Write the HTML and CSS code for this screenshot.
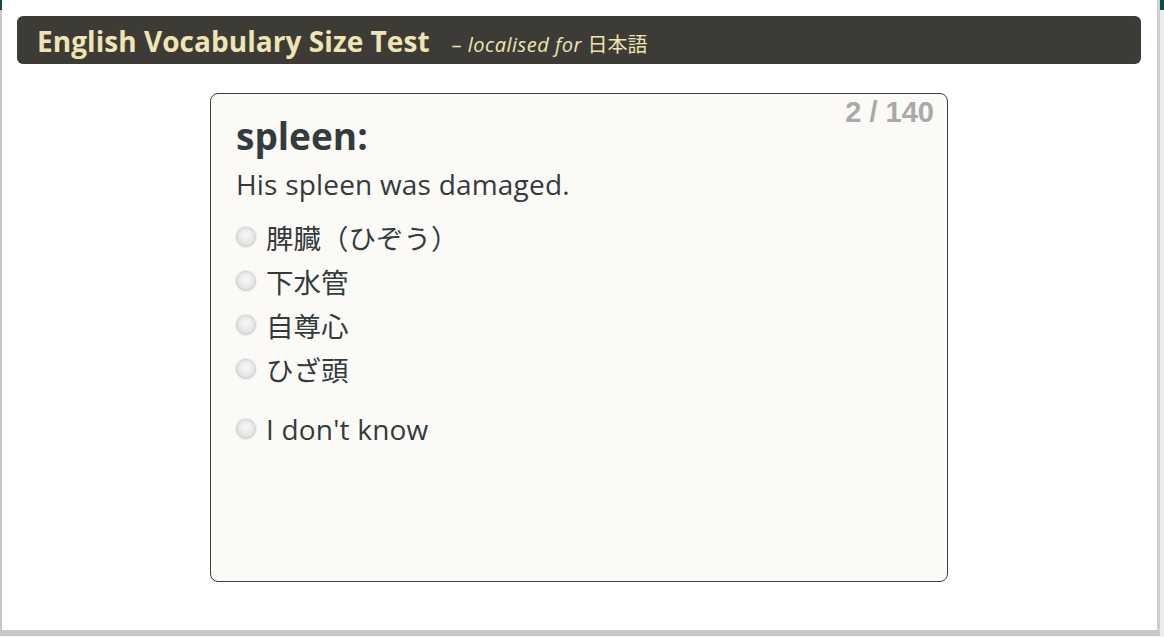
FILE: index.html
```html
<!DOCTYPE html>
<html lang="en">
<head>
<meta charset="utf-8">
<title>English Vocabulary Size Test</title>
<link rel="stylesheet" href="styles.css">
</head>
<body>
<div class="frame">
  <div class="page">
    <header class="banner">
      <h1 class="title">English Vocabulary Size Test</h1>
      <span class="subtitle"><span class="dash">–</span> <em>localised for</em> <span class="ja">日本語</span></span>
    </header>
    <main class="card">
      <div class="counter">2 / 140</div>
      <h2 class="word">spleen:</h2>
      <p class="example">His spleen was damaged.</p>
      <ul class="options">
        <li class="option"><span class="radio"></span><span class="ja">脾臓（ひぞう）</span></li>
        <li class="option"><span class="radio"></span><span class="ja">下水管</span></li>
        <li class="option"><span class="radio"></span><span class="ja">自尊心</span></li>
        <li class="option"><span class="radio"></span><span class="ja">ひざ頭</span></li>
        <li class="option unknown"><span class="radio"></span><span>I don't know</span></li>
      </ul>
    </main>
  </div>
</div>
</body>
</html>
```
FILE: styles.css
```css
html, body {
  margin: 0;
  padding: 0;
  background: #f4f4f4;
}
body {
  width: 1164px;
  height: 637px;
  overflow: hidden;
  font-family: "Open Sans", "Noto Sans CJK JP", sans-serif;
}
.frame {
  width: 1164px;
  height: 636px;
  box-sizing: border-box;
  padding: 0 4px 0 2px;
  background:
    linear-gradient(to bottom, #0e4d47 0, #0e4d47 10px, #ececec 10px) right top / 4px 100% no-repeat,
    linear-gradient(to bottom, #0e4d47 0, #0e4d47 10px, #c6c6c6 10px);
}
.page {
  background: #ffffff;
  height: 633px;
  padding: 16px 16px 0 15px;
  box-sizing: border-box;
  border-right: 3px solid #cfcfcf;
  border-bottom: 3px solid #c9c9c9;
}
.banner {
  display: flex;
  align-items: baseline;
  gap: 22px;
  height: 48px;
  box-sizing: border-box;
  padding: 6px 20px 0;
  background: #3d3b36;
  border-radius: 6px;
}
.title {
  margin: 0;
  font-size: 28px;
  font-weight: 700;
  color: #efe4b3;
  letter-spacing: 0.05px;
}
.subtitle {
  font-size: 20px;
  color: #efe4b3;
  letter-spacing: 0.5px;
}
.subtitle .ja {
  font-family: "Noto Sans CJK JP", sans-serif;
  font-size: 20px;
  letter-spacing: 0;
}
.card {
  position: relative;
  width: 738px;
  height: 489px;
  box-sizing: border-box;
  margin: 29px auto 0;
  padding: 16px 25px 0;
  background: #fbfaf7;
  border: 1px solid #3a3f40;
  border-radius: 8px;
  color: #333b3d;
}
.counter {
  position: absolute;
  top: 2px;
  right: 13px;
  font-family: "Liberation Sans", Arial, sans-serif;
  font-weight: 700;
  font-size: 29px;
  color: #a9a9a9;
}
.word {
  margin: 0;
  font-size: 37px;
  font-weight: 700;
  line-height: 52px;
}
.example {
  margin: 0 0 9px;
  font-size: 28px;
  line-height: 44px;
  letter-spacing: 0.2px;
}
.options {
  list-style: none;
  margin: 0;
  padding: 0;
}
.option {
  display: flex;
  align-items: center;
  gap: 10px;
  height: 44px;
  font-size: 28px;
}
.option .ja {
  font-family: "Noto Sans CJK JP", sans-serif;
  font-size: 27.5px;
}
.option.unknown {
  margin-top: 16px;
  letter-spacing: 0.2px;
}
.radio {
  flex: none;
  width: 20px;
  height: 20px;
  box-sizing: border-box;
  border-radius: 50%;
  border: 1px solid #cfcfcf;
  background: radial-gradient(circle at 50% 40%, #fafafa 0, #e4e4e4 60%, #cfcfcf 100%);
  box-shadow: 0 0 0 1px #ececec;
}
```
